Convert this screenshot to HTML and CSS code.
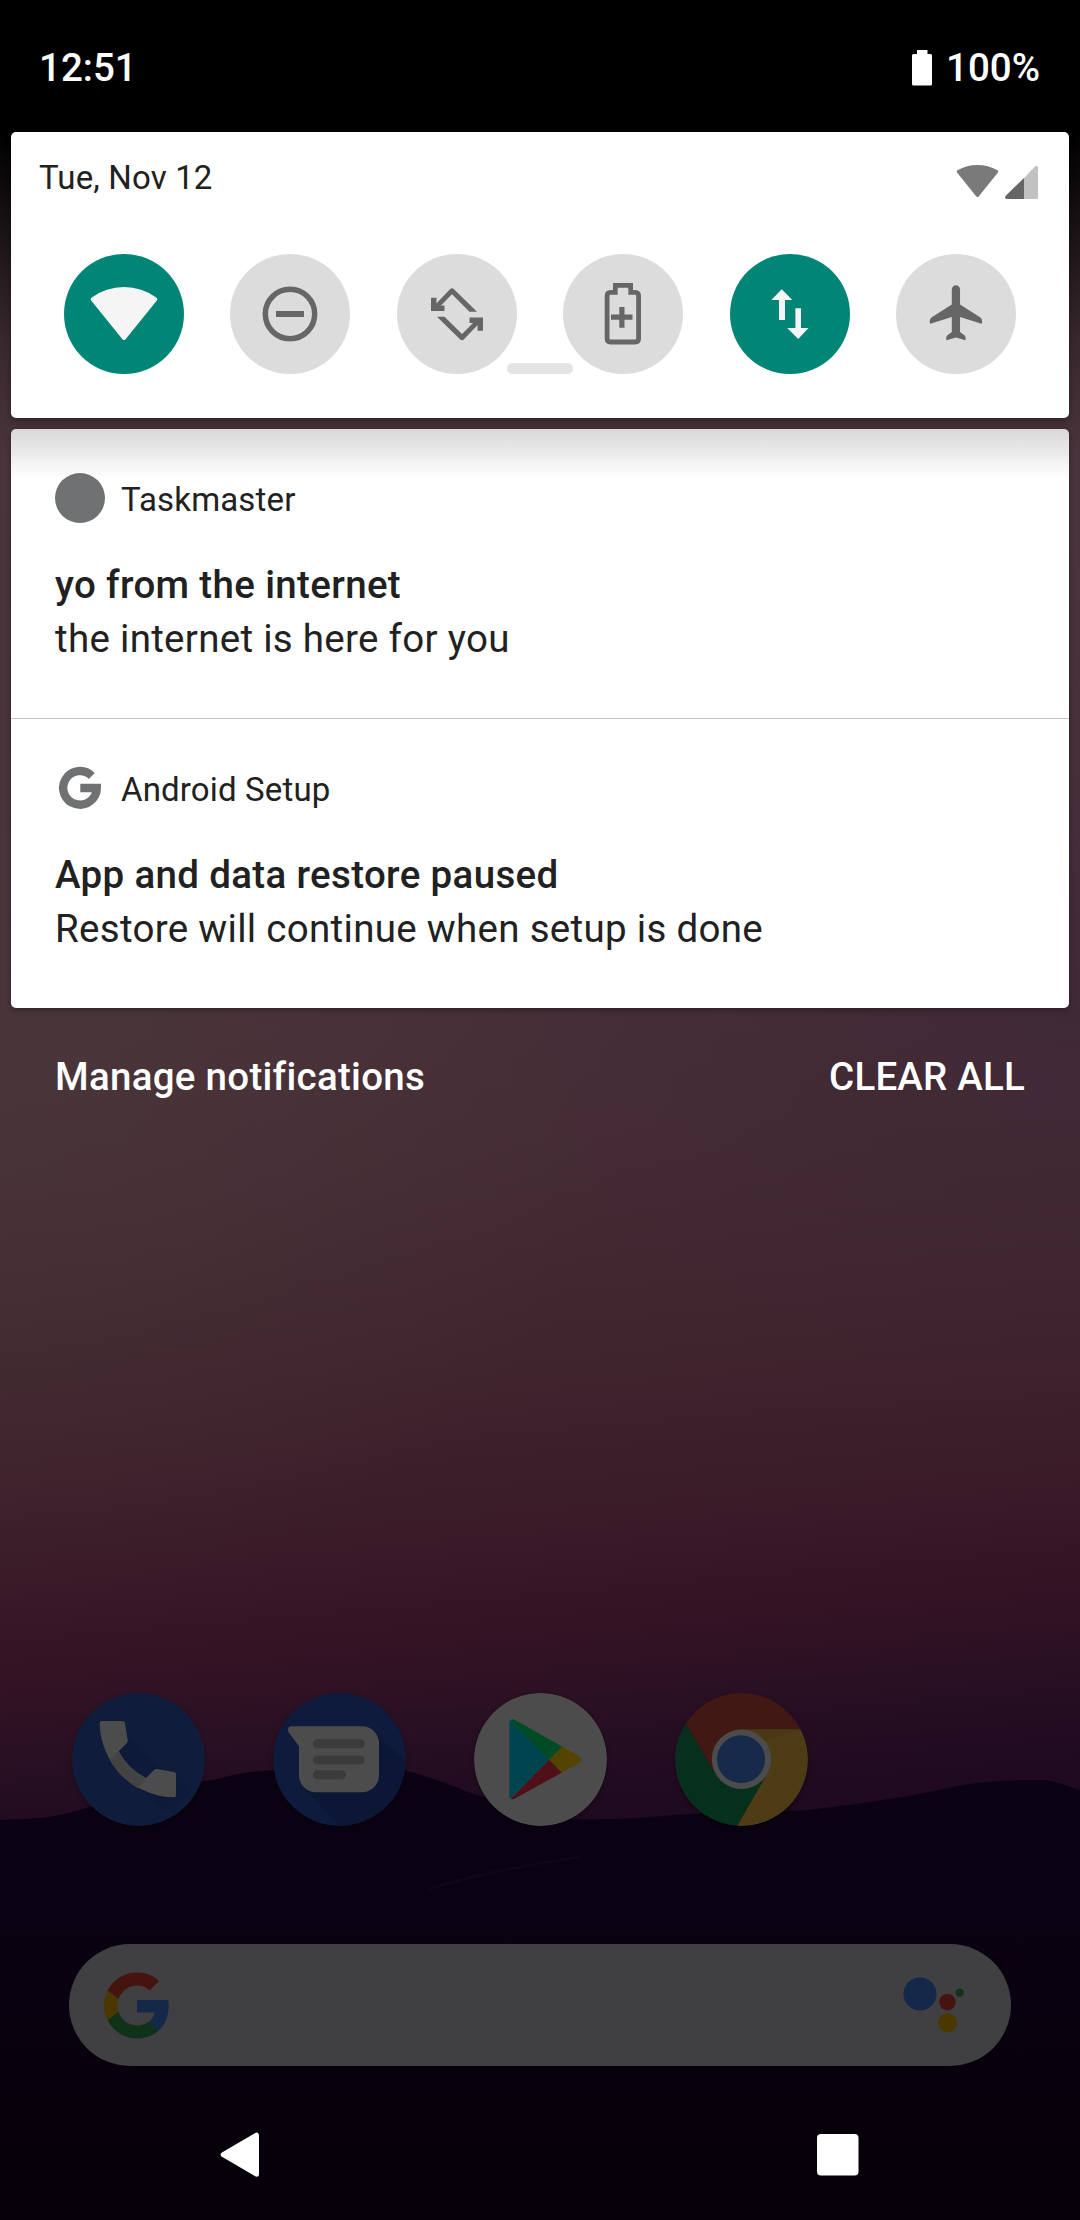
FILE: index.html
```html
<!DOCTYPE html>
<html lang="en">
<head>
<meta charset="utf-8">
<title>Notification shade</title>
<link rel="stylesheet" href="styles.css">
</head>
<body>
<div class="screen">
  <svg class="wallpaper" viewBox="0 0 1080 2220" aria-hidden="true">
    <defs>
      <linearGradient id="hill" x1="0" y1="1765" x2="0" y2="2220" gradientUnits="userSpaceOnUse">
        <stop offset="0" stop-color="#0b0313"/><stop offset=".35" stop-color="#0a0212"/><stop offset=".75" stop-color="#07010c"/><stop offset="1" stop-color="#06000a"/>
      </linearGradient>
    </defs>
    <path fill="url(#hill)" d="M0 1820C20 1819 45 1818 60 1815C85 1808 110 1802 140 1798C165 1793 180 1784 202 1781C222 1780 235 1772 260 1771C290 1769 310 1765 340 1763C370 1763 390 1767 407 1771C440 1779 455 1788 480 1796C510 1802 545 1817 570 1819C610 1820 630 1818 650 1817C700 1812 760 1812 808 1810C840 1806 865 1803 895 1798C930 1793 955 1785 978 1783C1000 1780 1020 1780 1045 1780C1060 1782 1072 1788 1080 1790V2220H0Z"/>
    <path d="M428 1889Q500 1868 580 1857" fill="none" stroke="#0f0617" stroke-width="3"/>
  </svg>

  <header class="status">
    <span>12:51</span>
    <span class="battery">
      <svg width="20" height="36" viewBox="0 0 20 36"><path fill="#fff" d="M5 0H15.500V4H18.500Q20 4 20 5.500V34Q20 35.500 18.500 35.500H1.500Q0 35.500 0 34V5.500Q0 4 1.500 4H5Z"/></svg>
      100%
    </span>
  </header>

  <section class="card quick">
    <div class="quick-head">
      <span>Tue, Nov 12</span>
      <svg width="82" height="36" viewBox="0 0 82 36">
        <path fill="#7a7a7a" stroke="#7a7a7a" stroke-width="3" stroke-linejoin="round" d="M21.500 32.500L2.200 8.500A40 40 0 0 1 40.800 8.500Z"/>
        <path fill="#666" d="M68 15V36H50.500Q48 35 50 32.500Z"/>
        <path fill="#c2c2c2" d="M68 15L79 3.500Q82 1.500 82 4.500V34.500Q82 36 80.500 36H68Z"/>
      </svg>
    </div>
    <div class="tiles">
      <svg class="tile on" viewBox="0 0 120 120"><path fill="#f5f5f5" stroke="#f5f5f5" stroke-width="4" stroke-linejoin="round" d="M60 84L28.700 45.300A53 53 0 0 1 91.300 45.300Z"/></svg>
      <svg class="tile" viewBox="0 0 120 120"><circle cx="60" cy="60" r="24.700" fill="none" stroke="#666" stroke-width="5.500"/><path fill="#666" d="M46 57H74V63H46Z"/></svg>
      <svg class="tile" viewBox="0 0 120 120"><g id="turn" fill="#666"><path d="M36 53L53 35.200Q55 33.200 57 35.200L80 57.700H72.500L55 40.300L40 55.500Z"/><path d="M34 43.700H39.500V51.500H47.500V57H34Z"/></g><use href="#turn" transform="rotate(180 60 60.200)"/></svg>
      <svg class="tile" viewBox="0 0 120 120"><path fill="none" stroke="#666" stroke-width="4.800" d="M52.400 38.300V31.400H67.600V38.300H72Q75.600 38.300 75.600 42V84.500Q75.600 88 72 88H47.700Q44.100 88 44.100 84.500V42Q44.100 38.300 47.700 38.300Z"/><path fill="#dcdcdc" d="M54.800 35H65.200V42H54.800Z"/><path fill="none" stroke="#666" stroke-width="5.200" d="M48 63.200H69.500M58.900 53V73.700"/></svg>
      <svg class="tile on" viewBox="0 0 120 120"><path fill="#f5f5f5" d="M51.700 35.300L62.300 46H55V66H49V46H41.300ZM65.400 54.300H71V74H78.500L68.200 85L57.200 74H65.400Z"/></svg>
      <svg class="tile" viewBox="0 0 120 120"><path transform="translate(28.300 25.800) scale(2.750)" fill="#666" d="M21 15.600Q21 16.100 20.500 15.900L13 13.500V19L14.600 20.200Q15 20.500 15 21V21.700Q15 22.100 14.600 21.900L11.500 21L8.400 21.900Q8 22.100 8 21.700V21Q8 20.500 8.400 20.200L10 19V13.500L2.500 15.900Q2 16.100 2 15.600V14.900Q2 14.100 2.600 13.700L10 9V3.500C10 2.670 10.670 2 11.500 2S13 2.670 13 3.500V9L20.400 13.700Q21 14.100 21 14.900Z"/></svg>
    </div>
    <div class="handle"></div>
  </section>

  <main class="card notes">
    <article class="note">
      <div class="app">
        <svg width="50" height="50" viewBox="0 0 50 50"><circle cx="25" cy="25" r="25" fill="#707173"/></svg>
        <span>Taskmaster</span>
      </div>
      <h2>yo from the internet</h2>
      <p>the internet is here for you</p>
    </article>
    <article class="note">
      <div class="app">
        <svg width="50" height="50" viewBox="0 0 50 50"><path fill="none" stroke="#707173" stroke-width="8.400" d="M36.800 12.900A16.800 16.800 0 1 0 41.800 25H25.300"/></svg>
        <span>Android Setup</span>
      </div>
      <h2>App and data restore paused</h2>
      <p>Restore will continue when setup is done</p>
    </article>
  </main>

  <div class="actions"><span>Manage notifications</span><span>CLEAR ALL</span></div>

  <div class="dock">
    <svg viewBox="0 0 133 133">
      <circle cx="66.500" cy="66.500" r="66.500" fill="#0f1c3c"/>
      <path fill="#0d1836" d="M55 40L90 76L104 79L120 96A66 66 0 0 1 92 118L37 67Z" opacity=".35"/>
      <path fill="#4c4c4c" d="M30 28H50.500Q52.700 28 53 30L55.700 47Q56 49 54.700 50.300L46.700 58.300Q56 76 74 85L82 77Q83.300 75.700 85 76L102 79Q104 79.300 104 81.500V102Q104 104.300 102 104.300C62 104 28 70 27.700 30Q27.700 28 30 28Z"/>
      <path fill="#434343" d="M46.700 58.300Q56 76 74 85L66 95.500Q47 84 37.700 66.700Z"/>
    </svg>
    <svg viewBox="0 0 133 133">
      <circle cx="66.500" cy="66.500" r="66.500" fill="#0e1b3d"/>
      <path fill="#0b1630" d="M104 42L132 68A66.500 66.500 0 0 1 67 133L30 94Z" opacity=".6"/>
      <path fill="#4c4c4c" d="M18 33.300H89A17 17 0 0 1 106 50V82.300A17 17 0 0 1 89 99.300H43A17 17 0 0 1 26 82.300V53.300L15.500 39Q13.500 34 18 33.300Z"/>
      <path stroke="#3b3b3b" stroke-width="9" stroke-linecap="round" d="M44.500 50.800H87.200M44.500 67H87.200M44.500 81.800H68.500"/>
    </svg>
    <svg viewBox="0 0 133 133">
      <defs><clipPath id="tri"><path d="M35.300 30Q35.300 26.300 39 26.300L41 27L105 63Q109 66.700 105 70L41 105.600Q35.300 107.500 35.300 103Z"/></clipPath></defs>
      <circle cx="66.500" cy="66.500" r="66.500" fill="#4c4c4c"/>
      <g clip-path="url(#tri)">
        <path fill="#00444f" d="M35 26V107L75.300 66.700Z"/>
        <path fill="#004b23" d="M35 26L75.300 66.700L88.500 53.500L60 26Z"/>
        <path fill="#4f1019" d="M35 107.500L75.300 66.700L88.500 80L60 108Z"/>
        <path fill="#534400" d="M75.300 66.700L100 42H112V92H100Z"/>
      </g>
    </svg>
    <svg viewBox="0 0 133 133">
      <defs><clipPath id="disc"><circle cx="66.500" cy="66.500" r="66.500"/></clipPath></defs>
      <g clip-path="url(#disc)">
        <path fill="#421815" d="M0 0H133V36.300H66.500L40 80L10.700 31Z"/>
        <path fill="#07301c" d="M0 13L10.700 31L40 80L66.500 95L92 81L62 133H0Z"/>
        <path fill="#4d3c16" d="M133 36.300H66.500L92 81L62 133H133Z"/>
        <path fill="#47330f" d="M66.500 36.300H126L90 48Z" opacity=".5"/>
      </g>
      <circle cx="66.500" cy="66.200" r="29.700" fill="#4c4c4c"/>
      <circle cx="66" cy="66.200" r="24" fill="#182a4c"/>
    </svg>
  </div>

  <div class="search">
    <svg width="66" height="67" viewBox="0 0 48 48">
      <path fill="#46140f" d="M24 9.500c3.540 0 6.710 1.220 9.210 3.600l6.850-6.850C35.900 2.380 30.470 0 24 0 14.620 0 6.510 5.380 2.560 13.220l7.980 6.190C12.430 13.720 17.740 9.500 24 9.500z"/>
      <path fill="#142849" d="M46.980 24.550c0-1.570-.15-3.090-.38-4.550H24v9.020h12.940c-.58 2.960-2.260 5.480-4.780 7.180l7.730 6c4.510-4.180 7.090-10.360 7.090-17.650z"/>
      <path fill="#4b3801" d="M10.530 28.590c-.48-1.450-.76-2.990-.76-4.590s.27-3.140.76-4.590l-7.980-6.190C.92 16.460 0 20.120 0 24c0 3.880.92 7.540 2.560 10.780l7.970-6.190z"/>
      <path fill="#103219" d="M24 48c6.480 0 11.930-2.130 15.890-5.810l-7.730-6c-2.150 1.450-4.920 2.300-8.160 2.300-6.260 0-11.570-4.220-13.470-9.910l-7.980 6.190C6.510 42.620 14.620 48 24 48z"/>
    </svg>
    <svg width="62" height="58" viewBox="0 0 62 58">
      <circle cx="17" cy="18" r="16.500" fill="#142849"/><circle cx="44.500" cy="26.200" r="8.300" fill="#46140f"/><circle cx="44.500" cy="46.800" r="9.600" fill="#4b3801"/><circle cx="56.800" cy="16.600" r="4.200" fill="#103219"/>
    </svg>
  </div>

  <nav class="nav">
    <svg width="40" height="46" viewBox="0 0 40 46"><path fill="#fff" stroke="#fff" stroke-width="5" stroke-linejoin="round" d="M3.200 22.700L36.500 3.200V42.200Z"/></svg>
    <svg width="42" height="42" viewBox="0 0 42 42"><rect width="41.500" height="41.500" rx="4" fill="#fff"/></svg>
  </nav>
</div>
</body>
</html>
```
FILE: styles.css
```css
* { box-sizing: border-box; }

body {
  margin: 0;
  background: #000;
  font-family: Roboto, sans-serif;
  color: #212121;
}

svg { display: block; flex: none; }

.screen {
  position: relative;
  display: flex;
  flex-direction: column;
  width: 1080px;
  height: 2220px;
  overflow: hidden;
  background:
    linear-gradient(180deg, #000 132px, rgba(0, 0, 0, 0.62) 240px, rgba(0, 0, 0, 0.25) 340px, transparent 460px),
    radial-gradient(ellipse 620px 520px at 0 1080px, rgba(75, 62, 60, 0.45), rgba(75, 60, 60, 0.2) 55%, transparent),
    radial-gradient(ellipse 700px 450px at 1080px 1010px, rgba(58, 38, 54, 0.5), transparent),
    linear-gradient(175deg, #4b373f 0, #4a323b 900px, #462c35 1180px, #40252e 1380px, #3a1a28 1580px, #331324 1675px, #2a1023 1745px, #1f0a20 1850px, #1b091e 2000px);
}

.wallpaper {
  position: absolute;
  inset: 0;
  width: 1080px;
  height: 2220px;
}

.status {
  position: relative;
  display: flex;
  align-items: flex-start;
  justify-content: space-between;
  height: 132px;
  padding: 45px 40px 0 39px;
  font-size: 38.5px;
  font-weight: 500;
  line-height: 45px;
  color: #fff;
}

.battery { display: flex; align-items: center; gap: 14px; }

.card {
  position: relative;
  margin: 0 11px;
  border-radius: 5px;
  background: #fff;
  box-shadow: 0 2px 6px rgba(0, 0, 0, 0.35);
}

.quick {
  display: flex;
  flex-direction: column;
  height: 286px;
  margin-bottom: 11px;
}

.quick-head {
  display: flex;
  justify-content: space-between;
  height: 122px;
  padding: 26px 31px 0 28px;
  font-size: 33px;
  letter-spacing: 0.15px;
  line-height: 39px;
}

.quick-head svg { margin-top: 5px; }

.tiles {
  display: flex;
  justify-content: space-between;
  padding: 0 53px;
}

.tile {
  width: 120px;
  height: 120px;
  border-radius: 50%;
  background: #dcdcdc;
}

.tile.on { background: #008577; }

.handle {
  width: 66px;
  height: 11px;
  margin: -11px auto 0;
  border-radius: 6px;
  background: #e4e4e4;
}

.notes {
  background: linear-gradient(#d8d8d8, #e2e2e2 13px, #fff 50px);
}

.note {
  height: 289px;
  padding: 44px 44px 0;
}

.note + .note {
  height: 290px;
  border-top: 1px solid #c6c6c6;
}

.app {
  display: flex;
  gap: 16px;
  height: 50px;
  font-size: 33px;
  letter-spacing: 0.15px;
  line-height: 53px;
}

.note h2,
.note p {
  margin: 0;
  font-size: 38.5px;
  letter-spacing: 0.3px;
  line-height: 54px;
}

.note h2 { margin-top: 35px; font-weight: 500; letter-spacing: 0.34px; }
.note p { font-weight: 400; }

.actions {
  position: relative;
  display: flex;
  justify-content: space-between;
  padding: 46px 55px 0;
  font-size: 38.5px;
  font-weight: 500;
  letter-spacing: 0.2px;
  line-height: 45px;
  color: #fff;
}

.actions span:first-child { letter-spacing: 0.28px; }

.dock {
  position: relative;
  display: grid;
  grid-template-columns: repeat(5, 133px);
  gap: 68px;
  margin-top: auto;
  padding-left: 72px;
}

.dock svg {
  width: 133px;
  height: 133px;
  border-radius: 50%;
  box-shadow: 0 2px 4px rgba(0, 0, 0, 0.3);
}

.search {
  position: relative;
  display: flex;
  align-items: center;
  justify-content: space-between;
  height: 122px;
  margin: 118px 69px 0;
  padding: 0 46px 0 35px;
  border-radius: 61px;
  background: #404042;
}

.nav {
  position: relative;
  display: flex;
  justify-content: space-between;
  align-items: center;
  height: 154px;
  padding: 24px 221px 0 220px;
}
```
